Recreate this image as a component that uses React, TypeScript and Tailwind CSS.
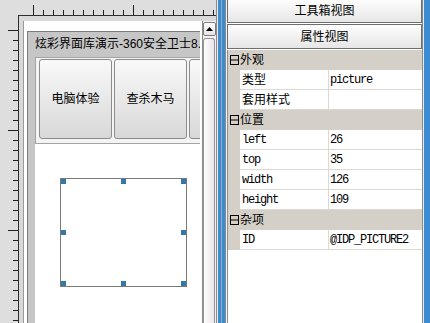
import React from "react";

const topTicks = Array.from({ length: 19 }, (_, k) => k);
const leftTicks = Array.from({ length: 30 }, (_, k) => k);

function TopRuler() {
  return (
    <svg width={198} height={15} className="block shrink-0">
      {topTicks.map((k) => {
        const x = 15 + 10 * k + 0.5;
        const long = k % 10 === 0;
        return <line key={k} x1={x} x2={x} y1={long ? 5 : 10} y2={15} stroke="#1e1e1e" strokeWidth={1} />;
      })}
    </svg>
  );
}

function LeftRuler() {
  return (
    <svg width={18} height={308} className="block shrink-0">
      {leftTicks.map((k) => {
        const y = 15 + 10 * k + 0.5;
        const long = k % 10 === 0;
        return <line key={k} x1={long ? 8 : 13} x2={18} y1={y} y2={y} stroke="#1e1e1e" strokeWidth={1} />;
      })}
    </svg>
  );
}

function Handle({ className }: { className: string }) {
  return <div className={"absolute w-[5px] h-[5px] bg-[#3577a6] " + className} />;
}

function CollapseIcon() {
  return (
    <svg width={9} height={10} className="block shrink-0">
      <rect x={0.5} y={0.5} width={8} height={9} fill="none" stroke="#000" strokeWidth={1} />
      <line x1={1} x2={8} y1={5} y2={5} stroke="#000" strokeWidth={1} />
    </svg>
  );
}

function Category({ label }: { label: string }) {
  return (
    <div className="h-[20px] bg-[#d4d0c8] flex items-center pl-[2px] shrink-0">
      <CollapseIcon />
      <span className="ml-[1px] text-[12px] leading-none whitespace-nowrap">{label}</span>
    </div>
  );
}

const mono = { fontFamily: '"Liberation Mono", "DejaVu Sans Mono", monospace' };

function Prop({ name, value, cjk }: { name: string; value: string; cjk?: boolean }) {
  return (
    <div className="h-[20px] flex shrink-0">
      <div className="w-[12px] bg-[#d4d0c8] shrink-0" />
      <div className="w-[89px] shrink-0 border-r border-b border-[#dcd9d3] flex items-center pl-[2px] overflow-hidden">
        {cjk ? (
          <span className="text-[12px] leading-none whitespace-nowrap">{name}</span>
        ) : (
          <span className="text-[12px] leading-none tracking-[-1.2px] whitespace-nowrap" style={mono}>
            {name}
          </span>
        )}
      </div>
      <div className="flex-1 min-w-0 border-b border-[#dcd9d3] flex items-center pl-[1px] overflow-hidden">
        <span className="text-[12px] leading-none tracking-[-1.2px] whitespace-nowrap" style={mono}>
          {value}
        </span>
      </div>
    </div>
  );
}

export default function App() {
  return (
    <div
      className="w-[430px] h-[323px] flex overflow-hidden bg-[#dedede] text-black"
      style={{ fontFamily: '"Liberation Sans", "Noto Sans CJK SC", sans-serif' }}
    >
      {/* Left designer pane */}
      <div className="w-[216px] h-full flex flex-col shrink-0 bg-[#dedede]">
        <div className="h-[15px] flex shrink-0">
          <div className="w-[18px] shrink-0" />
          <TopRuler />
        </div>
        <div className="flex-1 flex min-h-0">
          <LeftRuler />
          <div className="flex-1 min-w-0 flex border-t border-l border-[#2e2e2e] bg-[#d9d9d9] pl-[4px] pt-[5px] overflow-hidden">
            <div className="flex-1 min-w-0 flex border-l border-[#9a9a9a] bg-white">
              {/* viewport */}
              <div className="flex-1 min-w-0 pl-[3px] pt-[10px] overflow-hidden flex">
                <div className="w-[173px] shrink-0 border-l border-t border-[#7c7c7c] bg-[#c6c6c6] pl-[7px] flex flex-col overflow-hidden">
                  <div className="h-[25px] shrink-0 flex items-center pb-[1px] text-[12px] whitespace-nowrap leading-none">
                    炫彩界面库演示-360安全卫士8.0
                  </div>
                  <div className="flex-1 bg-white flex flex-col min-w-[300px]">
                    <div className="h-[87px] shrink-0 border-t border-l border-b border-[#a3a3a3] bg-[#f4f4f4] pl-[3px] pt-[1px] flex gap-[2px]">
                      {["电脑体验", "查杀木马", "清理插件"].map((t) => (
                        <div
                          key={t}
                          className="w-[73px] h-[80px] shrink-0 border border-[#8c8c8c] rounded-[3px] bg-gradient-to-b from-[#f9f9f9] to-[#d8d8d8] flex items-center justify-center text-[12px] leading-none whitespace-nowrap"
                        >
                          {t}
                        </div>
                      ))}
                    </div>
                    <div className="ml-[25px] mt-[34px] w-[127px] h-[109px] border border-[#7a7a7a] relative shrink-0">
                      <Handle className="left-0 top-0" />
                      <Handle className="left-[60px] top-0" />
                      <Handle className="right-0 top-0" />
                      <Handle className="left-0 top-[51px]" />
                      <Handle className="right-0 top-[51px]" />
                      <Handle className="left-0 bottom-0" />
                      <Handle className="left-[60px] bottom-0" />
                      <Handle className="right-0 bottom-0" />
                    </div>
                  </div>
                </div>
              </div>
              {/* scrollbar */}
              <div className="w-[14px] shrink-0 bg-[#f4f1f4] border-l border-[#8c8c8c] flex flex-col pt-[1px]">
                <div className="h-[14px] shrink-0 border border-[#7d7d7d] rounded-[2px] bg-gradient-to-b from-white to-[#e4e4e4] flex items-center justify-center">
                  <svg width={7} height={4} className="block">
                    <polygon points="3.5,0 7,4 0,4" fill="#000" />
                  </svg>
                </div>
                <div className="mt-[2px] flex-1 mr-[1px] border border-b-0 border-[#949494] rounded-t-[3px] bg-gradient-to-r from-[#fdfdfd] to-[#ebe6eb]" />
              </div>
            </div>
          </div>
        </div>
      </div>

      {/* Splitter */}
      <div className="w-[11px] h-full shrink-0 flex">
        <div className="w-[1px] bg-[#8a8a8a]" />
        <div className="w-[1px] bg-[#ececec]" />
        <div className="w-[3px] bg-[#3a8dd3]" />
        <div className="w-[1px] bg-[#9fa6ad]" />
        <div className="w-[3px] bg-[#3a8dd3]" />
        <div className="w-[1px] bg-[#8a8a8a]" />
        <div className="w-[1px] bg-[#f4f4f4]" />
      </div>

      {/* Right pane */}
      <div className="w-[195px] h-full shrink-0 flex flex-col bg-white">
        <div className="h-[23px] shrink-0 border-x border-b border-[#6e6e6e] bg-gradient-to-b from-[#fdfdfd] to-[#e6e6e6] flex items-center justify-center text-[12px] leading-none">
          工具箱视图
        </div>
        <div className="mt-[1px] h-[25px] shrink-0 border border-[#6e6e6e] bg-gradient-to-b from-[#fdfdfd] to-[#e6e6e6] flex items-center justify-center text-[12px] leading-none">
          属性视图
        </div>
        <div className="mt-[1px] flex-1 border-l border-[#8f8f8f] flex flex-col">
          <Category label="外观" />
          <Prop name="类型" value="picture" cjk />
          <Prop name="套用样式" value="" cjk />
          <Category label="位置" />
          <Prop name="left" value="26" />
          <Prop name="top" value="35" />
          <Prop name="width" value="126" />
          <Prop name="height" value="109" />
          <Category label="杂项" />
          <Prop name="ID" value="@IDP_PICTURE2" />
        </div>
      </div>

      {/* Right edge */}
      <div className="w-[8px] h-full shrink-0 flex">
        <div className="w-[1px] bg-[#8a8a8a]" />
        <div className="w-[1px] bg-[#e8e8e8]" />
        <div className="w-[6px] bg-[#3a8dd3]" />
      </div>
    </div>
  );
}
